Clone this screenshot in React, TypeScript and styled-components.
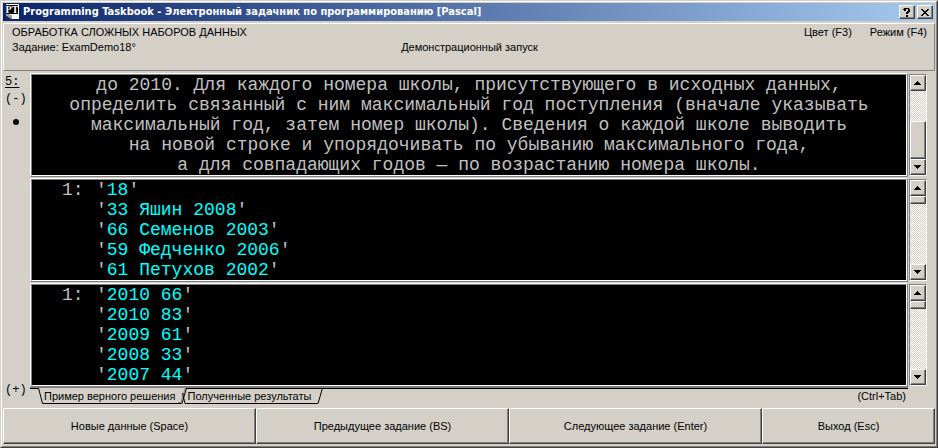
import React from 'react';
import styled, { createGlobalStyle, css } from 'styled-components';

const FACE = '#d4d0c8';
const SHADE = '#808080';
const DARK = '#404040';

const GlobalStyle = createGlobalStyle`
  * { box-sizing: border-box; }
  body {
    margin: 0;
    background: ${FACE};
    color: #000;
    font: 11px/15px "Liberation Sans", Arial, sans-serif;
  }
  button {
    margin: 0;
    padding: 0;
    border: 0;
    background: none;
    color: inherit;
    font: inherit;
  }
`;

const raised = css`
  background: ${FACE};
  border: 1px solid;
  border-color: #fff ${DARK} ${DARK} #fff;
  box-shadow: inset -1px -1px 0 ${SHADE};
`;

const Frame = styled.div`
  background: ${FACE};
  border: 1px solid;
  border-color: ${FACE} ${DARK} ${DARK} ${FACE};
`;

const FrameInner = styled.div`
  border: 1px solid;
  border-color: #fff ${SHADE} ${SHADE} #fff;
  padding: 1px 1px 2px;
`;

const TitleBar = styled.header`
  display: flex;
  align-items: center;
  gap: 2px;
  height: 18px;
  padding: 0 2px;
  background: linear-gradient(to right, #0a246a, #a6caf0);
  color: #fff;
`;

const Title = styled.h1`
  flex: 1;
  margin: 0 0 0 1px;
  font: bold 11px/18px "DejaVu Sans Condensed", Tahoma, sans-serif;
  white-space: nowrap;
`;

const CaptionButton = styled.button`
  ${raised}
  display: grid;
  place-items: center;
  width: 16px;
  height: 14px;
  color: #000;
`;

const InfoPanel = styled.section`
  display: grid;
  grid-template-columns: 1fr auto 1fr;
  grid-template-rows: 15px 15px;
  height: 48px;
  margin-top: 2px;
  padding: 1px 7px 0 8px;
  border: 1px solid;
  border-color: #fff ${SHADE} ${SHADE} #fff;
  white-space: nowrap;
`;

const Topic = styled.div`
  grid-column: 1 / 3;
`;

const InfoActions = styled.div`
  display: flex;
  justify-content: flex-end;
  gap: 18px;
`;

const Body = styled.main`
  display: grid;
  grid-template-columns: 27px 1fr;
  margin-top: 2px;
  padding-right: 8px;
`;

const Side = styled.nav`
  display: flex;
  flex-direction: column;
  align-items: flex-start;
  padding: 1px 0 5px 2px;
  font: 12px/17px "Liberation Mono", monospace;
`;

const SideButton = styled.button<{ $underline?: boolean; $last?: boolean }>`
  text-decoration: ${(p) => (p.$underline ? 'underline' : 'none')};
  text-underline-offset: 2px;
  margin-top: ${(p) => (p.$last ? 'auto' : '0')};
`;

const Marker = styled.span`
  width: 6px;
  height: 6px;
  margin: 11px 0 0 8px;
  border-radius: 50%;
  background: #000;
`;

const Panes = styled.div`
  display: flex;
  flex-direction: column;
  gap: 1px;
`;

const PaneRow = styled.section`
  display: grid;
  grid-template-columns: 1fr 18px;
  gap: 1px;
`;

const Bevel = styled.div`
  border: 1px solid;
  border-color: #fff ${SHADE} ${SHADE} #fff;
`;

const Screen = styled.div<{ $centered?: boolean }>`
  min-height: 102px;
  padding-left: ${(p) => (p.$centered ? '0' : '30px')};
  border: 1px solid;
  border-color: ${SHADE} #fff #fff ${SHADE};
  background: #000;
  color: #c0c0c0;
  font: 18px/20px "Liberation Mono", "Courier New", monospace;
  text-align: ${(p) => (p.$centered ? 'center' : 'left')};
  white-space: pre;
  overflow: hidden;
`;

const DataLine = styled.div`
  display: grid;
  grid-template-columns: 34px 1fr;
`;

const Value = styled.span`
  color: #00ffff;
`;

const ScrollBar = styled.div`
  display: flex;
  flex-direction: column;
  margin: 1px 0;
  border: 1px solid;
  border-color: ${SHADE} #fff #fff ${SHADE};
  background: repeating-conic-gradient(#fff 0 25%, ${FACE} 0 50%) 0 0 / 2px 2px;
`;

const ScrollButton = styled.button`
  ${raised}
  display: grid;
  place-items: center;
  height: 16px;
`;

const Thumb = styled.div<{ $large?: boolean }>`
  ${raised}
  height: ${(p) => (p.$large ? '38px' : '8px')};
  margin-top: ${(p) => (p.$large ? 'auto' : '0')};
`;

const TrackSpace = styled.div`
  flex: 1;
`;

const TabStrip = styled.div`
  display: flex;
  justify-content: space-between;
  margin-right: 19px;
  margin-top: -1px;
  padding-left: 8px;
  border-top: 1px solid ${SHADE};
  background: linear-gradient(#000, #000) 0 0 / 100% 1px no-repeat;
`;

const Tabs = styled.div`
  display: flex;
`;

const Tab = styled.button`
  display: flex;
  height: 16px;
  margin-right: -6px;
  svg { display: block; flex: none; }
`;

const TabLabel = styled.span<{ $active?: boolean }>`
  height: 16px;
  padding: 1px 3px 0 1px;
  border-bottom: 1px solid #000;
  background: ${(p) => (p.$active ? FACE : 'none')};
  line-height: 15px;
  white-space: nowrap;
`;

const TabHint = styled.span`
  padding: 1px 2px 0 0;
`;

const Commands = styled.footer`
  display: grid;
  grid-template-columns: 253fr 253fr 253fr 173fr;
  margin-top: 4px;
`;

const Command = styled.button`
  ${raised}
  height: 36px;
`;

const AppIcon = () => (
  <svg width="15" height="16" viewBox="0 0 15 16" aria-hidden="true">
    <path d="M1 0H14V15H6L1 11Z" fill="#fff" />
    <path d="M1 1H13V10H1Z" fill="#000" />
    <text x="7" y="9" fill="#fff" fontFamily="Liberation Serif" fontWeight="700" fontSize="10" textAnchor="middle">PT</text>
    <path d="M1 10H5V15Z" fill="#a0a0a0" />
    <path d="M1 12L6 15V11" fill="none" stroke="#404040" />
  </svg>
);

const Arrow = ({ down = false }: { down?: boolean }) => (
  <svg width="8" height="4" viewBox="0 0 8 4" shapeRendering="crispEdges" aria-hidden="true">
    <path d={down ? 'M0 0H7V1H6V2H5V3H4V4H3V3H2V2H1V1H0Z' : 'M3 0H4V1H5V2H6V3H7V4H0V3H1V2H2V1H3Z'} />
  </svg>
);

const ScrollControl = ({ atEnd = false }: { atEnd?: boolean }) => (
  <ScrollBar>
    <ScrollButton aria-label="Вверх"><Arrow /></ScrollButton>
    <Thumb $large={atEnd} />
    {!atEnd && <TrackSpace />}
    <ScrollButton aria-label="Вниз"><Arrow down /></ScrollButton>
  </ScrollBar>
);

const TabItem = ({ label, active = false }: { label: string; active?: boolean }) => (
  <Tab role="tab" aria-selected={active}>
    <svg width="5" height="16" viewBox="0 0 5 16">
      {active && <path d="M0 0H5V15L1 3Z" fill={FACE} />}
      <path d={active ? 'M0.5 0L4.5 15.5H5' : 'M1.5 5L4 15.5H5'} fill="none" stroke="#000" />
    </svg>
    <TabLabel $active={active}>{label}</TabLabel>
    <svg width="9" height="16" viewBox="0 0 9 16">
      {active && <path d="M0 0H8L4 15H0Z" fill={FACE} />}
      {active && <path d="M7 0.5L3 14.5H0" fill="none" stroke={SHADE} />}
      <path d="M8.5 0L4 15.5H0" fill="none" stroke="#000" />
    </svg>
  </Tab>
);

const statement = [
  'до 2010. Для каждого номера школы, присутствующего в исходных данных,',
  'определить связанный с ним максимальный год поступления (вначале указывать',
  'максимальный год, затем номер школы). Сведения о каждой школе выводить',
  'на новой строке и упорядочивать по убыванию максимального года,',
  'а для совпадающих годов — по возрастанию номера школы.',
];
const source = ['18', '33 Яшин 2008', '66 Семенов 2003', '59 Федченко 2006', '61 Петухов 2002'];
const results = ['2010 66', '2010 83', '2009 61', '2008 33', '2007 44'];

const DataPane = ({ values }: { values: string[] }) => (
  <PaneRow>
    <Bevel>
      <Screen>
        {values.map((value, i) => (
          <DataLine key={value}>
            <span>{i === 0 ? '1:' : ''}</span>
            <span>'<Value>{value}</Value>'</span>
          </DataLine>
        ))}
      </Screen>
    </Bevel>
    <ScrollControl />
  </PaneRow>
);

export default function App() {
  return (
    <Frame>
      <GlobalStyle />
      <FrameInner>
        <TitleBar>
          <AppIcon />
          <Title>Programming Taskbook - Электронный задачник по программированию [Pascal]</Title>
          <CaptionButton aria-label="Справка">
            <svg width="8" height="9" viewBox="0 0 8 9" shapeRendering="crispEdges">
              <path d="M1 0H6V1H7V4H6V5H5V6H3V4H4V3H5V1H3V3H1V2H0V1H1ZM3 7H5V9H3Z" />
            </svg>
          </CaptionButton>
          <CaptionButton aria-label="Закрыть">
            <svg width="8" height="7" viewBox="0 0 8 7" shapeRendering="crispEdges">
              <path d="M0 0H2V1H3V2H5V1H6V0H8V1H7V2H6V3H5V4H6V5H7V6H8V7H6V6H5V5H3V6H2V7H0V6H1V5H2V4H3V3H2V2H1V1H0Z" />
            </svg>
          </CaptionButton>
        </TitleBar>

        <InfoPanel>
          <Topic>ОБРАБОТКА СЛОЖНЫХ НАБОРОВ ДАННЫХ</Topic>
          <InfoActions>
            <button>Цвет (F3)</button>
            <button>Режим (F4)</button>
          </InfoActions>
          <div>Задание: ExamDemo18°</div>
          <div>Демонстрационный запуск</div>
        </InfoPanel>

        <Body>
          <Side>
            <SideButton $underline>5:</SideButton>
            <SideButton>(-)</SideButton>
            <Marker />
            <SideButton $last>(+)</SideButton>
          </Side>
          <Panes>
            <PaneRow>
              <Bevel>
                <Screen $centered>
                  {statement.map((line) => <div key={line}>{line}</div>)}
                </Screen>
              </Bevel>
              <ScrollControl atEnd />
            </PaneRow>
            <DataPane values={source} />
            <DataPane values={results} />
            <TabStrip>
              <Tabs role="tablist">
                <TabItem label="Пример верного решения" active />
                <TabItem label="Полученные результаты" />
              </Tabs>
              <TabHint>(Ctrl+Tab)</TabHint>
            </TabStrip>
          </Panes>
        </Body>

        <Commands>
          <Command>Новые данные (Space)</Command>
          <Command>Предыдущее задание (BS)</Command>
          <Command>Следующее задание (Enter)</Command>
          <Command>Выход (Esc)</Command>
        </Commands>
      </FrameInner>
    </Frame>
  );
}
